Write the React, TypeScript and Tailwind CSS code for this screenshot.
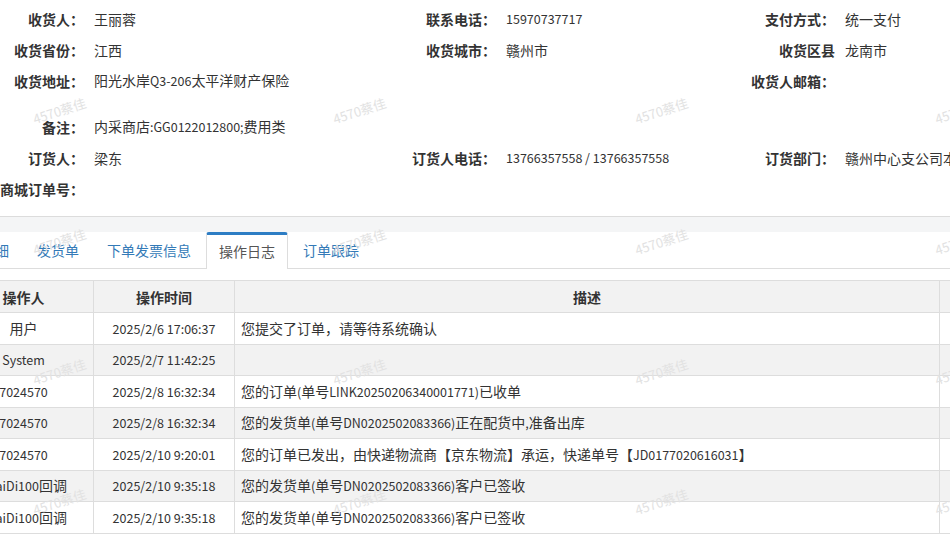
import React from 'react';

const info: [string, string][][] = [
  [['收货人：', '王丽蓉'], ['联系电话：', '15970737717'], ['支付方式：', '统一支付']],
  [['收货省份：', '江西'], ['收货城市：', '赣州市'], ['收货区县', '龙南市']],
  [['收货地址：', '阳光水岸Q3-206太平洋财产保险'], ['', ''], ['收货人邮箱：', '']],
  [['备注：', '内采商店:GG0122012800;费用类'], ['', ''], ['', '']],
  [['订货人：', '梁东'], ['订货人电话：', '13766357558 / 13766357558'], ['订货部门：', '赣州中心支公司本部']],
  [['商城订单号：', ''], ['', ''], ['', '']],
];

const tabs = ['商品明细', '发货单', '下单发票信息', '操作日志', '订单跟踪'];

const logs = [
  ['用户', '2025/2/6 17:06:37', '您提交了订单，请等待系统确认'],
  ['System', '2025/2/7 11:42:25', ''],
  ['7024570', '2025/2/8 16:32:34', '您的订单(单号LINK20250206340001771)已收单'],
  ['7024570', '2025/2/8 16:32:34', '您的发货单(单号DN0202502083366)正在配货中,准备出库'],
  ['7024570', '2025/2/10 9:20:01', '您的订单已发出，由快递物流商【京东物流】承运，快递单号【JD0177020616031】'],
  ['KuaiDi100回调', '2025/2/10 9:35:18', '您的发货单(单号DN0202502083366)客户已签收'],
  ['KuaiDi100回调', '2025/2/10 9:35:18', '您的发货单(单号DN0202502083366)客户已签收'],
];

// watermark spots, laid over the page
const marks = [
  'left-[32px] top-[101px]', 'left-[332px] top-[101px]', 'left-[634px] top-[101px]', 'left-[934px] top-[101px]',
  'left-[32px] top-[232px]', 'left-[332px] top-[232px]', 'left-[634px] top-[232px]', 'left-[934px] top-[232px]',
  'left-[32px] top-[362px]', 'left-[332px] top-[362px]', 'left-[634px] top-[362px]', 'left-[934px] top-[362px]',
  'left-[32px] top-[492px]', 'left-[332px] top-[492px]', 'left-[634px] top-[492px]', 'left-[934px] top-[492px]',
];

// latin runs are set a touch smaller so digits come out as narrow as the original
function Txt({ s }: { s: string }) {
  const parts = s.split(/([\x20-\x7E]+)/).filter(Boolean);
  return (
    <>
      {parts.map((p, i) =>
        /^[\x20-\x7E]+$/.test(p) ? (
          <span key={i} className="text-[12.5px]">{p}</span>
        ) : (
          <span key={i}>{p}</span>
        )
      )}
    </>
  );
}

function InfoRow({ row, extra }: { row: [string, string][]; extra?: string }) {
  return (
    <div className={`grid grid-cols-[84px_328px_84px_255px_84px_1fr] h-[31px] items-center ${extra ?? ''}`}>
      {row.map(([label, value], i) => (
        <React.Fragment key={i}>
          <div className="text-right font-bold text-[#333] whitespace-nowrap">{label}</div>
          <div className="pl-[10px] text-[#333] whitespace-nowrap overflow-hidden">
            <Txt s={value} />
          </div>
        </React.Fragment>
      ))}
    </div>
  );
}

export default function App() {
  return (
    <div className="relative w-[950px] h-[535px] overflow-hidden bg-white text-[14px] leading-5 font-['Noto_Sans_CJK_SC',sans-serif]">
      <div className="pt-[3px] pb-[12px] border-b border-[#dcdcdc]">
        {info.map((row, i) => (
          <InfoRow key={i} row={row} extra={i === 2 ? 'mb-[15px]' : ''} />
        ))}
      </div>

      <div className="h-[15px] bg-[#f4f5f6]" />

      <div className="h-[37px] border-b border-[#dddddd] flex items-end">
        <div className="flex -ml-[60px] h-full">
          {tabs.map((t) => {
            const active = t === '操作日志';
            return (
              <div
                key={t}
                className={
                  active
                    ? 'mr-[2px] px-[12px] h-[37px] -mb-px flex items-center bg-white border-x border-[#dddddd] border-t-[3px] border-t-[#2d7dc4] rounded-t-[3px] text-[#555]'
                    : 'mr-[2px] px-[12px] h-[36px] flex items-center border-x border-transparent text-[#337ab7]'
                }
              >
                <span className={active ? '-mt-[3px]' : ''}>{t}</span>
              </div>
            );
          })}
        </div>
      </div>

      <div className="mt-[11px] -ml-[47px]">
        <table className="border-collapse table-fixed w-[1046px] text-[#333]">
          <colgroup>
            <col className="w-[140px]" />
            <col className="w-[141px]" />
            <col className="w-[705px]" />
            <col className="w-[60px]" />
          </colgroup>
          <thead>
            <tr className="bg-[#f2f2f2] h-[32px]">
              <th className="border border-[#dddddd] font-bold">操作人</th>
              <th className="border border-[#dddddd] font-bold">操作时间</th>
              <th className="border border-[#dddddd] font-bold">描述</th>
              <th className="border border-[#dddddd]" />
            </tr>
          </thead>
          <tbody>
            {logs.map((r, i) => (
              <tr key={i} className={`h-[31.5px] ${i % 2 === 1 ? 'bg-[#f2f2f2]' : 'bg-white'}`}>
                <td className="border border-[#dddddd] text-center whitespace-nowrap">
                  <Txt s={r[0]} />
                </td>
                <td className="border border-[#dddddd] text-center whitespace-nowrap">
                  <Txt s={r[1]} />
                </td>
                <td className="border border-[#dddddd] pl-[6px] whitespace-nowrap">
                  <Txt s={r[2]} />
                </td>
                <td className="border border-[#dddddd]" />
              </tr>
            ))}
          </tbody>
        </table>
      </div>

      <div className="pointer-events-none absolute inset-0">
        {marks.map((m) => (
          <span
            key={m}
            className={`absolute ${m} text-[13px] text-[#e2e2e2] -rotate-[18deg] whitespace-nowrap select-none`}
          >
            4570蔡佳
          </span>
        ))}
      </div>
    </div>
  );
}
